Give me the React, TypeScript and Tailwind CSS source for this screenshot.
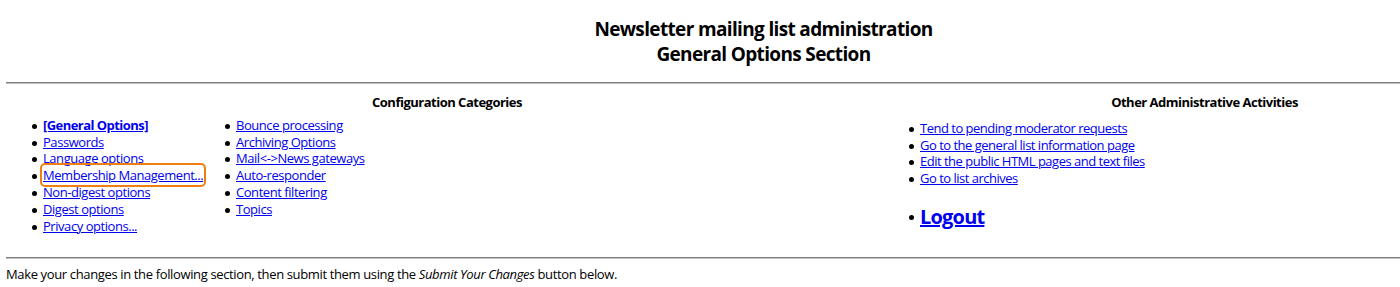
import React from "react";

const Dot = () => (
  <span className="absolute left-[-11px] top-[7px] w-[5px] h-[5px] rounded-full bg-black" />
);

function Item({ children, ring = false }: { children: React.ReactNode; ring?: boolean }) {
  return (
    <li className="relative">
      <Dot />
      <a
        href="#"
        className={
          "text-[#0000ee] underline " +
          (ring ? "outline-2 outline-[#ef7f12] outline-offset-[1px] rounded-[2px]" : "")
        }
      >
        {children}
      </a>
    </li>
  );
}

export default function App() {
  return (
    <div className="w-[1400px] h-[287px] overflow-hidden bg-white text-black text-[13px] leading-[16.8px] tracking-[-0.45px] font-['Open_Sans','Noto_Sans',sans-serif]">
      <div className="w-[1530px] pl-[6px] pr-[9px]">
        <div className="text-center font-bold text-[19px] leading-[25px] tracking-[-0.65px] pt-[17px]">
          Newsletter mailing list administration
          <br />
          General Options Section
        </div>
        <div className="mt-[15px] h-[2px] border-t border-t-[#808080] border-b border-b-[#c0c0c0]" />
        <div className="grid grid-cols-[882px_633px] pt-[10px]">
          <div>
            <div className="text-center font-bold tracking-[-0.5px]">Configuration Categories</div>
            <div className="flex pt-[6px]">
              <ul className="pl-[37px] w-[230px]">
                <li className="relative">
                  <Dot />
                  <a href="#" className="text-[#0000ee] underline font-bold tracking-[-0.55px]">[General Options]</a>
                </li>
                <Item>Passwords</Item>
                <Item>Language options</Item>
                <Item ring>Membership Management...</Item>
                <Item>Non-digest options</Item>
                <Item>Digest options</Item>
                <Item>Privacy options...</Item>
              </ul>
              <ul>
                <Item>Bounce processing</Item>
                <Item>Archiving Options</Item>
                <Item>Mail&lt;-&gt;News gateways</Item>
                <Item>Auto-responder</Item>
                <Item>Content filtering</Item>
                <Item>Topics</Item>
              </ul>
            </div>
          </div>
          <div>
            <div className="text-center font-bold tracking-[-0.5px]">Other Administrative Activities</div>
            <ul className="pl-[32px] pt-[9px] tracking-[-0.5px]">
              <Item>Tend to pending moderator requests</Item>
              <Item>Go to the general list information page</Item>
              <Item>Edit the public HTML pages and text files</Item>
              <Item>Go to list archives</Item>
            </ul>
            <ul className="pl-[32px] pt-[17px]">
              <li className="relative text-[20px] leading-[25px] font-bold tracking-[-0.8px]">
                <span className="absolute left-[-11px] top-[11px] w-[5px] h-[5px] rounded-full bg-black" />
                <a href="#" className="text-[#0000ee] underline">Logout</a>
              </li>
            </ul>
          </div>
        </div>
        <div className="mt-[23px] h-[2px] border-t border-t-[#808080] border-b border-b-[#c0c0c0]" />
        <p className="pt-[7px] tracking-[-0.36px]">
          Make your changes in the following section, then submit them using the <em>Submit Your Changes</em> button below.
        </p>
      </div>
    </div>
  );
}
